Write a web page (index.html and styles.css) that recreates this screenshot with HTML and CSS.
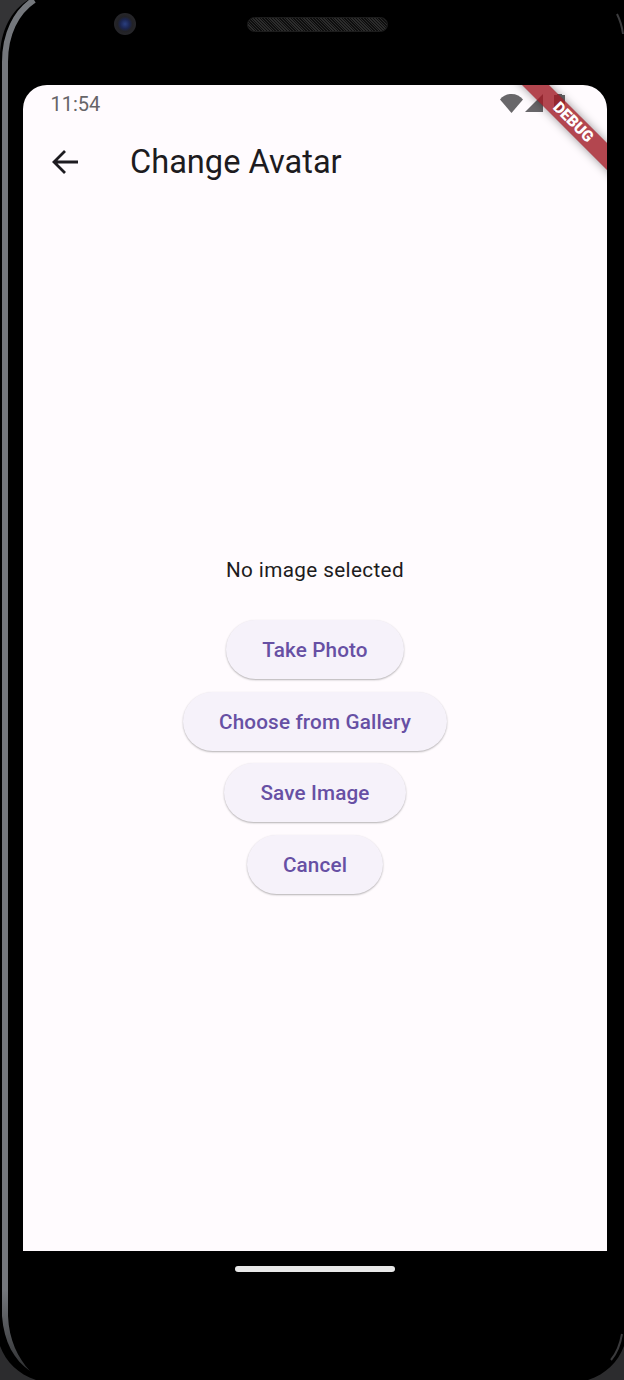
FILE: index.html
```html
<!DOCTYPE html>
<html lang="en">
<head>
    <meta charset="UTF-8">
    <meta name="viewport" content="width=device-width, initial-scale=1.0">
    <title>Change Avatar</title>
    <link rel="stylesheet" href="styles.css">
</head>
<body>
    <div class="device">
        <!-- phone body edge, drawn over the black -->
        <svg class="bezel" width="624" height="1380" viewBox="0 0 624 1380" fill="none">
            <defs>
                <linearGradient id="edge-fade" x1="0" y1="1290" x2="0" y2="1372" gradientUnits="userSpaceOnUse">
                    <stop offset="0" stop-color="#74777c"/>
                    <stop offset="1" stop-color="#2e2f31"/>
                </linearGradient>
            </defs>
            <path d="M0 58C0 30 12 10 28 0H0Z" fill="#343436"/>
            <path d="M5 1290V62C5 34 16 12 34 0" stroke="#74777c" stroke-width="6"/>
            <path d="M2 1290V1316C4 1342 14 1360 30 1371C18 1358 9 1340 8 1316V1290Z" fill="url(#edge-fade)"/>
            <path d="M0 1346C6 1362 18 1374 36 1380H0Z" fill="#2c2c2e"/>
            <path d="M624 1346C618 1362 606 1374 588 1380H624Z" fill="#2c2c2e"/>
            <path d="M622 1334C620 1346 616 1354 611 1360" stroke="#3a3a3c" stroke-width="2"/>
            <path d="M617 14C620 20 622 26 623 34" stroke="#3c3c3e" stroke-width="2"/>
        </svg>

        <div class="sensors">
            <div class="camera"></div>
            <div class="speaker"></div>
        </div>

        <div class="screen">
            <div class="status-bar">
                <span class="time">11:54</span>
                <div class="status-icons">
                    <svg width="23" height="19" viewBox="0 0 24 19" preserveAspectRatio="none"><path d="M0 5.5C3 2 7 0 12 0s9 2 12 5.5L12 19Z"/></svg>
                    <svg width="18" height="18" viewBox="0 0 18 18"><path d="M18 0V18H0Z"/></svg>
                    <svg width="11" height="18" viewBox="0 0 11 18"><path d="M3 1V0H8V1H11V18H0V1Z"/></svg>
                </div>
            </div>

            <div class="app-bar">
                <svg class="back" width="26" height="24" viewBox="0 0 26 24" fill="none"><path d="M26 12H2M13 1 2 12 13 23" stroke="#1d1b20" stroke-width="2.8"/></svg>
                <h1 class="title">Change Avatar</h1>
            </div>

            <div class="content">
                <p class="message">No image selected</p>
                <button class="btn">Take Photo</button>
                <button class="btn">Choose from Gallery</button>
                <button class="btn">Save Image</button>
                <button class="btn">Cancel</button>
            </div>

            <div class="debug-banner"><span>DEBUG</span></div>
        </div>

        <div class="nav-area">
            <div class="home-pill"></div>
        </div>
    </div>
</body>
</html>
```

FILE: styles.css
```css
* {
  box-sizing: border-box;
}
html, body {
  margin: 0;
  padding: 0;
  background: #000;
}
.device {
  position: relative;
  width: 624px;
  height: 1380px;
  padding-left: 23px;
  padding-right: 17px;
  background: #000;
  overflow: hidden;
  font-family: Roboto, "Liberation Sans", sans-serif;
}
.bezel {
  position: absolute;
  top: 0;
  left: 0;
}
.sensors {
  position: relative;
  display: flex;
  align-items: center;
  height: 85px;
  padding: 0 0 37px 91px;
}
.camera {
  width: 22px;
  height: 22px;
  border-radius: 50%;
  background: radial-gradient(circle, #2a3f80 0, #1b2550 30%, #222226 48%, #2c2c30 100%);
}
.speaker {
  width: 141px;
  height: 15px;
  margin-left: 111px;
  border-radius: 8px;
  border: 1px solid #1c1c1c;
  background: repeating-linear-gradient(45deg, #2c2c2c 0 1px, #0e0e0e 1px 2px);
}
.screen {
  position: relative;
  display: flex;
  flex-direction: column;
  height: 1166px;
  background: #fffbfe;
  border-radius: 24px 24px 0 0;
  overflow: hidden;
}
.status-bar {
  display: flex;
  justify-content: space-between;
  align-items: center;
  height: 38px;
  padding: 0 42px 0 27.5px;
}
.time {
  font-size: 20px;
  color: #666468;
}
.status-icons {
  display: flex;
  align-items: center;
  gap: 2px;
  margin-bottom: 2px;
}
.status-icons svg {
  fill: #69676a;
}
.status-icons svg:last-child {
  margin-left: 9px;
}
.app-bar {
  display: flex;
  align-items: center;
  height: 78px;
  padding-left: 29px;
}
.back {
  flex: none;
}
.title {
  margin: 0 0 0 52px;
  font-size: 32.6px;
  font-weight: 400;
  color: #1d1b20;
}
.content {
  flex: 1;
  display: flex;
  flex-direction: column;
  align-items: center;
  justify-content: center;
  gap: 12.5px;
  padding-bottom: 1px;
}
.message {
  margin: 0 0 26px;
  font-size: 20.7px;
  letter-spacing: 0.37px;
  color: #1d1b20;
}
.btn {
  height: 59px;
  padding: 1px 36px 0;
  border: 0;
  border-radius: 30px;
  background: #f6f2fa;
  box-shadow: 0 1px 2px rgba(0, 0, 0, 0.3);
  font-family: inherit;
  font-size: 20.7px;
  font-weight: 500;
  letter-spacing: 0.15px;
  color: #6750a4;
}
.debug-banner {
  position: absolute;
  top: 28px;
  right: -66px;
  display: flex;
  justify-content: center;
  align-items: center;
  width: 200px;
  height: 19px;
  padding-bottom: 1px;
  background: rgba(160, 25, 35, 0.8);
  box-shadow: 0 0 10px rgba(0, 0, 0, 0.4);
  transform: rotate(45deg);
}
.debug-banner span {
  font-size: 15.5px;
  font-weight: 900;
  color: #fff;
}
.nav-area {
  display: flex;
  justify-content: center;
  padding-top: 15px;
}
.home-pill {
  width: 160px;
  height: 6px;
  border-radius: 3px;
  background: #e8e8e8;
}
```
